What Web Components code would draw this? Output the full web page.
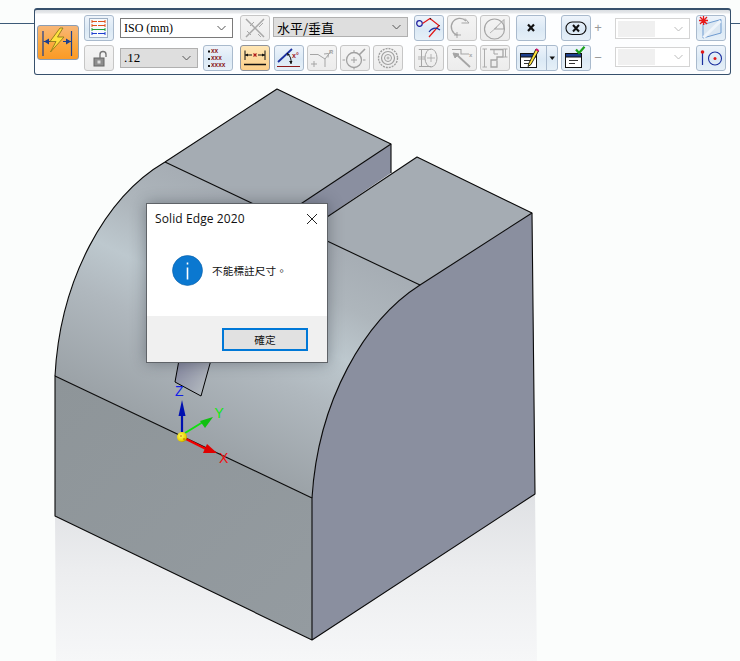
<!DOCTYPE html>
<html lang="zh-Hant"><head><meta charset="utf-8"><title>Solid Edge</title>
<style>
html,body{margin:0;padding:0;background:#fbfdfc;overflow:hidden}
se-app{width:740px;height:661px}
</style></head><body>
<template id="t-app"><style>
:host{display:block;position:relative;overflow:hidden;background:#fbfdfc;font-family:"Noto Sans","Noto Sans CJK TC",sans-serif}
se-toolbar{position:absolute;left:34px;top:8px}
se-dialog{position:absolute;left:146px;top:203px}
se-model{position:absolute;left:0;top:0}
</style><se-model></se-model><se-toolbar></se-toolbar>
<se-dialog><span slot="title">Solid Edge 2020</span>不能標註尺寸。<span slot="ok">確定</span></se-dialog></template>

<template id="t-model"><style>:host{display:block;width:740px;height:661px}svg{display:block}text{font-family:"Liberation Sans",sans-serif}</style>
<svg width="740" height="661" viewBox="0 0 740 661">
<defs>
<linearGradient id="fl" gradientUnits="userSpaceOnUse" x1="0" y1="495" x2="0" y2="661"><stop offset="0" stop-color="#dfe1e4"/><stop offset=".45" stop-color="#ecedef"/><stop offset="1" stop-color="#f6f7f8"/></linearGradient>
<linearGradient id="cyl" gradientUnits="userSpaceOnUse" x1="230" y1="193" x2="126" y2="410"><stop offset="0" stop-color="#a6adb4"/><stop offset=".22" stop-color="#aeb6bc"/><stop offset=".42" stop-color="#bdc8ce"/><stop offset=".62" stop-color="#b0b8be"/><stop offset="1" stop-color="#9ba2a7"/></linearGradient>
<linearGradient id="lf" gradientUnits="userSpaceOnUse" x1="55" y1="380" x2="312" y2="640"><stop offset="0" stop-color="#8e9599"/><stop offset="1" stop-color="#949ba0"/></linearGradient>
<linearGradient id="wd" gradientUnits="userSpaceOnUse" x1="180" y1="365" x2="210" y2="385"><stop offset="0" stop-color="#8a8da3"/><stop offset=".6" stop-color="#a3a8b4"/><stop offset="1" stop-color="#b4bbc0"/></linearGradient>
<radialGradient id="ball" cx=".4" cy=".4" r=".7"><stop offset="0" stop-color="#ffff60"/><stop offset=".7" stop-color="#e8d000"/><stop offset="1" stop-color="#8a7a00"/></radialGradient>
</defs>
<rect width="740" height="661" fill="#fbfdfc"/>
<path d="M55 516L312 640L535 494L537 661H56Z" fill="url(#fl)"/>
<path d="M0 23.5H34M731 23.5H740" stroke="#3c5a78" stroke-width="1" fill="none"/>
<!-- notch side -->
<path d="M391 144V173L306 231L281 217Z" fill="#8a8fa0"/>
<!-- cylinder -->
<path d="M165 162L281 217L306 231L420 285C365 320 318 400 312 498L55 376C60 280 105 197 165 162Z" fill="url(#cyl)"/>
<!-- tops -->
<path d="M277 89L391 144L281 217L165 162Z" fill="#a5acb3"/>
<path d="M417 157L532 213L420 285L306 231Z" fill="#a5acb3"/>
<!-- left and right faces -->
<path d="M55 376L312 498V640L55 516Z" fill="url(#lf)"/>
<path d="M532 213L420 285C365 320 318 400 312 498V640L535 494Z" fill="#8a8f9f"/>
<!-- wedge -->
<path d="M179 360L175 382L201 396L211 360Z" fill="url(#wd)" stroke="#000" stroke-width="1"/>
<g fill="none" stroke="#0a0a0a" stroke-width="1.1" stroke-linejoin="round">
<path d="M55 376C60 280 105 197 165 162L277 89L391 144V173"/>
<path d="M165 162L281 217L391 144"/>
<path d="M306 231L417 157L532 213L535 494L312 640L55 516V376L312 498V640"/>
<path d="M306 231L420 285L532 213"/>
<path d="M420 285C365 320 318 400 312 498"/>
</g>
<!-- triad -->
<path d="M182 432V412" stroke="#0010b0" stroke-width="2.2"/>
<path d="M182 400L185.5 416H178.5Z" fill="#0010b0"/>
<path d="M185 433L203 422" stroke="#10e010" stroke-width="2"/>
<path d="M213 417L205 428L200 421Z" fill="#10c010"/>
<path d="M186 439L206 449" stroke="#f00000" stroke-width="2.4"/>
<path d="M217 453L203 453L207 444Z" fill="#e00000"/>
<circle cx="182" cy="437" r="5" fill="url(#ball)"/>
<circle cx="181" cy="436" r=".7" fill="#b03000"/><circle cx="184" cy="439" r=".7" fill="#b03000"/>
<text x="175" y="396" font-size="14" fill="#1020e8">Z</text>
<text x="214.500" y="418" font-size="14" fill="#10e810">Y</text>
<text x="219" y="463" font-size="14" fill="#f01010">X</text>
</svg></template>

<template id="t-tool"><style>
:host{display:inline-flex;box-sizing:border-box;width:30px;height:26px;border:1px solid #a9bacd;border-radius:3px;background:linear-gradient(#eef4fb,#dbe9f5 55%,#e6f0f8);flex:none;overflow:hidden}
:host([v="off"]){border-color:#c6c6c6;background:linear-gradient(#f4f4f4,#ececec)}
:host([v="on"]){border-color:#8f939b;background:linear-gradient(#ffe6b4,#fdd08a)}
:host([v="big"]){width:42px;height:35px;border-color:#8b9db3;background:linear-gradient(#f7b679,#fba83f 55%,#fb9a26)}
:host([v="split"]){width:42px}
::slotted(svg){display:block}
</style><slot></slot></template>

<template id="t-select"><style>
:host{display:flex;align-items:center;box-sizing:border-box;height:20px;border:1px solid #7a7a7a;background:#fff;color:#000;font:12px "Liberation Serif","Noto Sans CJK TC",serif;padding-left:3px;position:relative;flex:none}
:host([v="grey"]){background:#dedede;border-color:#b0b0b0}
:host([v="off"]){background:#fff;border-color:#d4d4d4}
.f{flex:1;white-space:nowrap;line-height:1}
:host([v="off"]) .f{height:16px;background:#f0f0f0;margin:0 19px 0 0}
svg{flex:none;margin:0 6px 0 4px}
:host([v="off"]) svg{margin-left:0;stroke:#bbb}
</style><span class="f"><slot></slot></span><svg width="9" height="6" viewBox="0 0 9 6" fill="none" stroke="#555" stroke-width="1"><path d="M.5 1L4.500 5L8.500 1"/></svg></template>

<template id="t-dialog"><style>
:host{display:flex;flex-direction:column;box-sizing:border-box;width:182px;height:160px;background:#fff;border:1px solid #5f6368;box-shadow:0 0 14px rgba(30,35,45,.38);color:#111;font:11px "Noto Sans CJK TC",sans-serif}
.title{display:flex;align-items:center;justify-content:space-between;height:29px;padding:0 9px 0 8px;font:12px "Open Sans","Noto Sans",sans-serif;letter-spacing:.1px}
.body{flex:1;display:flex;align-items:center;gap:9px;padding:0 0 9px 25px;font-size:10.700px;letter-spacing:0}
.foot{height:46px;background:#f0f0f0;display:flex;align-items:center;justify-content:flex-end;padding:0 19px 0 0;box-sizing:border-box}
.ok{box-sizing:border-box;width:86px;height:23px;border:2px solid #0078d7;background:#e1e1e1;display:flex;align-items:center;justify-content:center;font-size:10.700px;margin-top:1px}
svg{display:block;flex:none}
</style>
<div class="title"><slot name="title"></slot><svg width="12" height="12" viewBox="0 0 12 12" fill="none" stroke="#222" stroke-width="1"><path d="M1 1L11 11M11 1L1 11"/></svg></div>
<div class="body"><svg width="31" height="31" viewBox="0 0 31 31"><circle cx="15.500" cy="15.500" r="15" fill="#0b78d0" stroke="#0a5fa8" stroke-width=".6"/><rect x="14.700" y="12.500" width="1.600" height="12" fill="#fff"/><rect x="14.700" y="7.500" width="1.600" height="2" fill="#fff"/></svg><span><slot></slot></span></div>
<div class="foot"><div class="ok"><slot name="ok"></slot></div></div></template>

<template id="t-toolbar"><style>
:host{display:flex;box-sizing:border-box;width:697px;height:67px;border:1px solid #36506c;border-top:2px solid #36506c;border-radius:3px;background:linear-gradient(#d9dde2 0,#e8eaec 3px,#fdfeff 4px);padding:4px 0 3px 2px;align-items:center}
.c{display:grid;grid-template-rows:26px 26px;row-gap:4px;align-items:center;flex:none}
.r{display:flex;align-items:center;gap:3px}
.pm{color:#999;font:13px "Liberation Sans",sans-serif;width:14px;text-align:center}
text{font-family:"Liberation Sans",sans-serif}
</style>
<se-tool v="big"><svg width="40" height="33" viewBox="0 0 40 33" fill="none"><path d="M5 5V30M33.500 5V30" stroke="#1c3f8e" stroke-width="1.200"/><path d="M5.500 15.500H13M25 15.500H33" stroke="#1c3f8e" stroke-width="1.200"/><path d="M6 15.500L11 12.500V18.500ZM33 15.500L28 12.500V18.500Z" fill="#1c3f8e"/><path d="M22 2L12 15.500H18L12.500 26L26 11H19.500L25 2Z" fill="#ffe23f" stroke="#8c7a1c" stroke-width=".9"/></svg></se-tool>
<div class="c" style="margin-left:5px"><se-tool><svg width="28" height="24" viewBox="0 0 28 24" fill="none" stroke-width="1"><rect x="4.500" y="2.500" width="18" height="19" stroke="#9fb0c4" fill="#f6fafd"/><path d="M7 5.500H20M7 4V7M20 4V7M7 9.500H20M7 8V11M20 8V11" stroke="#e0531c"/><path d="M7 13.500H20M7 12V15" stroke="#22a038"/><path d="M20 12V15" stroke="#22a038"/><path d="M7 17.500H20M7 16V19M20 16V19" stroke="#1c3fd0"/><path d="M12.500 4v3M12.500 8v3M12.500 16v3" stroke="#fff"/></svg></se-tool>
<se-tool v="off"><svg width="28" height="24" viewBox="0 0 28 24" fill="none"><rect x="9" y="12" width="10" height="8" fill="#8e8e8e" stroke="#666"/><rect x="12.500" y="14.500" width="3" height="3" fill="#ddd"/><path d="M15 12V8.500a3 3 0 0 1 6 0V11" stroke="#777" stroke-width="1.400"/></svg></se-tool></div>
<div class="c" style="margin-left:6px"><div class="r"><se-select style="width:113px;height:20px">ISO (mm)</se-select></div>
<div class="r" style="gap:5px"><se-select v="grey" style="width:78px;font-size:13px">.12</se-select><se-tool><svg width="28" height="24" viewBox="0 0 28 24"><g font-size="6.500" font-weight="700" fill="#8c1a1a"><text x="7" y="6.500">xx</text><text x="7" y="14">xxx</text><text x="7" y="21">xxxx</text></g><path d="M4 4.500h2v2H4zM4 12h2v2H4zM4 19h2v2H4z" fill="#111"/></svg></se-tool></div></div>
<div class="c" style="margin-left:7px"><se-tool v="off"><svg width="28" height="24" viewBox="0 0 28 24" fill="none" stroke="#a8a8a8" stroke-width="1.500"><path d="M5 3L23 21M23 3L5 21"/><path d="M9 10L13 6M18 11L22 7M6 15L10 19M17 18L20 21" stroke-width="1"/></svg></se-tool>
<se-tool v="on"><svg width="28" height="24" viewBox="0 0 28 24" fill="none"><path d="M4 4.500V14M24 4.500V14M4 9H11M17 9H24" stroke="#111"/><path d="M4 9L7 7.500V10.500ZM24 9L21 7.500V10.500Z" fill="#111"/><path d="M12.500 7.500L15.500 10.500M15.500 7.500L12.500 10.500" stroke="#b01818" stroke-width="1.100"/><path d="M3 18.500H25" stroke="#111" stroke-width="1.600"/></svg></se-tool></div>
<div class="c" style="margin-left:3px"><div class="r"><se-select v="grey" style="width:135px;font:13px 'Noto Sans CJK TC',sans-serif;margin-top:-1px">水平/垂直</se-select></div>
<div class="r"><se-tool style="margin-left:1px"><svg width="28" height="24" viewBox="0 0 28 24" fill="none"><path d="M3 16L17 3" stroke="#1c2f9e" stroke-width="1.800"/><path d="M12 7A12 12 0 0 1 16 18" stroke="#111"/><path d="M12 7L15 8.500L12.500 10ZM16 18L14 15H17.500Z" fill="#111"/><path d="M2 20.500H25" stroke="#8c1a1a" stroke-width="1.100"/><text x="17" y="12" font-size="7" font-weight="700" fill="#a01818">x°</text></svg></se-tool>
<se-tool v="off"><svg width="28" height="24" viewBox="0 0 28 24" fill="none" stroke="#a5a5a5"><path d="M2 8.500H10L17 13V21M10 8.500M17 13L24 4"/><path d="M16 8L20.500 7.500L20 11.500" stroke-width="1"/><path d="M6 15V21M3 18H9"/><text x="21" y="8" font-size="6" font-weight="700" fill="#a5a5a5" stroke="none">R</text></svg></se-tool>
<se-tool v="off"><svg width="28" height="24" viewBox="0 0 28 24" fill="none" stroke="#a0a0a0" stroke-width="1.300"><circle cx="13" cy="14" r="7.500"/><path d="M13 11V17M10 14H16" stroke-width="1"/><path d="M1.500 14H4M22 14H24.500M13 4V6M13 22V23.500" stroke-width="1"/><path d="M18 9L24 3" stroke-width="1.600"/></svg></se-tool>
<se-tool v="off"><svg width="28" height="24" viewBox="0 0 28 24" fill="none" stroke="#a0a0a0"><circle cx="14" cy="12" r="9.500" stroke-width="1.400" stroke-dasharray="2 1"/><circle cx="14" cy="12" r="6.500" stroke-width="1.200"/><circle cx="14" cy="12" r="3.500"/><path d="M14 10.500v3M12.500 12h3" stroke-width=".8"/></svg></se-tool></div></div>
<div class="c" style="margin-left:6px;grid-template-columns:30px 30px 30px;column-gap:3px"><se-tool><svg width="28" height="24" viewBox="0 0 28 24" fill="none"><circle cx="4.500" cy="7.500" r="2.800" stroke="#1c1c9e" stroke-width="1.200"/><path d="M7.500 7.500L15 2.500L24 9.500L14 21" stroke="#e01818" stroke-width="1.200"/><path d="M14 16C17 12 21 11 25 14" stroke="#1c2f9e" stroke-width="1.200"/><path d="M15 2.500l1 .5M24 9.500l.5 .5" stroke="#111" stroke-width="1.200"/></svg></se-tool>
<se-tool v="off"><svg width="28" height="24" viewBox="0 0 28 24" fill="none" stroke="#a5a5a5" stroke-width="1.300"><path d="M18 5A8.500 8.500 0 1 0 9.500 19"/><path d="M17 2.500L21 7H13.500M9 16V22M6 19H13" stroke-width="1"/></svg></se-tool>
<se-tool v="off"><svg width="28" height="24" viewBox="0 0 28 24" fill="none" stroke="#a5a5a5" stroke-width="1.200"><circle cx="13.500" cy="13" r="10"/><path d="M13.500 13L23 3.500V13H13.500" stroke-width="1"/><path d="M9 17L16 11" stroke-width=".8"/></svg></se-tool>
<se-tool v="off"><svg width="28" height="24" viewBox="0 0 28 24" fill="none" stroke="#a5a5a5"><ellipse cx="16" cy="12" rx="6" ry="9"/><path d="M16 8V16M12 12H20" stroke-width=".8"/><path d="M4 3.500H16M4 20.500H16M6.500 4V20M4 3.500V4" stroke-width="1"/><path d="M3 11H10M3 13H10" stroke-width=".8"/></svg></se-tool>
<se-tool v="off"><svg width="28" height="24" viewBox="0 0 28 24" fill="none" stroke="#a5a5a5"><path d="M4 3.500H13V8H21" stroke-width="1.100"/><path d="M22 21L9 9" stroke-width="1.800"/><path d="M5 7L11 8L7 12Z" fill="#a5a5a5"/><text x="21" y="11" font-size="6" font-weight="700" fill="#a5a5a5" stroke="none">x</text></svg></se-tool>
<se-tool v="off"><svg width="28" height="24" viewBox="0 0 28 24" fill="none" stroke="#a5a5a5"><path d="M9 3.500H22V11H16V14H10V21H16V15" stroke-width="1.300"/><path d="M3.500 3V21M1.500 3H6M1.500 21H6M24.500 3V11M22.500 3H26.500M22.500 11H26.500" stroke-width=".9"/><path d="M13 3V8H17" stroke-width="1"/></svg></se-tool></div>
<div class="c" style="margin-left:6px;width:42px"><se-tool><svg width="28" height="24" viewBox="0 0 28 24" fill="none" stroke="#111" stroke-width="2.200"><path d="M11 8.500L17 15M17 8.500L11 15"/></svg></se-tool>
<se-tool v="split"><svg width="40" height="24" viewBox="0 0 40 24" fill="none"><rect x="3.500" y="7.500" width="16" height="14" fill="#fff" stroke="#111"/><rect x="3.500" y="7.500" width="16" height="3.500" fill="#1c3f8e" stroke="#111"/><path d="M7 14.500h9M7 17.500h6" stroke="#333"/><path d="M19 3L12 17L11 20.500L14 18.500L21.500 5Z" fill="#ffe23f" stroke="#111" stroke-width=".9"/><path d="M19 3l2.500 2" stroke="#d0106a" stroke-width="2.200"/><path d="M29.500 0V24" stroke="#a9bacd"/><path d="M32.500 10.500H38L35.250 14Z" fill="#111"/></svg></se-tool></div>
<div class="c" style="margin-left:3px"><se-tool><svg width="28" height="24" viewBox="0 0 28 24" fill="none"><rect x="4" y="6" width="20" height="12.500" rx="6.200" stroke="#111" stroke-width="1.100"/><path d="M11 9L17 15.500M17 9L11 15.500" stroke="#111" stroke-width="2"/></svg></se-tool>
<se-tool><svg width="28" height="24" viewBox="0 0 28 24" fill="none"><rect x="3.500" y="7.500" width="16" height="14" fill="#fff" stroke="#111"/><rect x="3.500" y="7.500" width="16" height="3.500" fill="#1c3f8e" stroke="#111"/><path d="M7 14.500h9M7 17.500h6" stroke="#333"/><path d="M14 3.500L17 7L22.500 .8" stroke="#1aa01a" stroke-width="2.200"/></svg></se-tool></div>
<div class="c" style="margin-left:0;width:24px;justify-items:start"><span class="pm" style="margin-left:0">+</span><span class="pm">−</span></div>
<div class="c" style="margin-left:0"><se-select v="off" style="width:75px;height:21px;margin-top:2px;padding-left:2px"></se-select><se-select v="off" style="width:75px;padding-left:2px;margin-top:-1px"></se-select></div>
<div class="c" style="margin-left:6px"><se-tool><svg width="28" height="24" viewBox="0 0 28 24" fill="none"><path d="M6 8.500L24 3.500V17L6 22Z" fill="#dbe7f2" stroke="#6f9bd0"/><path d="M6.500 21.500L23.500 5" stroke="#eef4fa" stroke-width="3"/><path d="M2 4.500H11M6.500 0V9M3 1L10 8M10 1L3 8" stroke="#e81818" stroke-width="1.300"/></svg></se-tool>
<se-tool><svg width="28" height="24" viewBox="0 0 28 24" fill="none"><path d="M5.500 7V19" stroke="#1c2f9e" stroke-width="1.200"/><circle cx="5.500" cy="6" r="1.800" fill="#e01818"/><circle cx="18" cy="12.500" r="6.500" stroke="#1c2f9e" stroke-width="1.100"/><circle cx="18" cy="12.500" r="1.500" fill="#e01818"/></svg></se-tool></div>
</template>

<se-app></se-app>
<script>
function def(tag,id){customElements.define(tag,class extends HTMLElement{constructor(){super();this.attachShadow({mode:"open"}).appendChild(document.getElementById(id).content.cloneNode(true));}});}
def("se-tool","t-tool");def("se-select","t-select");def("se-dialog","t-dialog");def("se-model","t-model");def("se-toolbar","t-toolbar");def("se-app","t-app");
</script>
</body></html>
